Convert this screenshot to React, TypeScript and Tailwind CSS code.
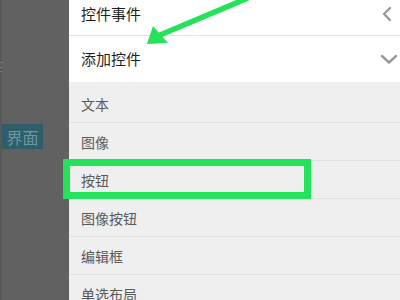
import React from "react";

const items = ["文本", "图像", "按钮", "图像按钮", "编辑框", "单选布局"];

export default function App() {
  const font = { fontFamily: '"Noto Sans CJK SC", "Noto Sans", sans-serif' };
  return (
    <div
      className="relative flex w-[400px] h-[300px] overflow-hidden bg-[#efefef]"
      style={font}
    >
      {/* left dimmed panel */}
      <div className="flex w-[69px] shrink-0 bg-[#616161]">
        <div className="w-[2px] shrink-0 bg-[#585858]" />
        <div className="flex flex-1 flex-col">
          <div className="h-[62px] shrink-0" />
          <div className="flex h-[10px] w-[3px] -ml-[2px] shrink-0 flex-col justify-between">
            <div className="h-px w-[3px] bg-[#7a7a7a]" />
            <div className="h-px w-[3px] bg-[#7a7a7a]" />
            <div className="h-px w-[2px] bg-[#7a7a7a]" />
          </div>
          <div className="h-[52px] shrink-0" />
          <div className="flex h-[25px] w-[41px] shrink-0 items-center justify-center bg-[#2f5e6a] text-[16px] leading-[20px] text-[#6c98a3]">
            界面
          </div>
        </div>
      </div>

      {/* right menu */}
      <div className="flex flex-1 flex-col">
        <div className="flex h-[35px] shrink-0 items-start justify-between bg-white pl-[12px] pr-[5px] pt-[3px]">
          <span className="text-[15px] leading-[22px] text-[#1e1e1e]">控件事件</span>
          <svg width="14" height="16" viewBox="0 0 14 16" className="mt-[3px] mr-[1px]">
            <path d="M10 2 L4 8 L10 14" fill="none" stroke="#9a9a9a" strokeWidth="2.4" strokeLinecap="round" strokeLinejoin="round" />
          </svg>
        </div>
        <div className="h-px shrink-0 bg-[#e3e3e3]" />
        <div className="flex h-[46px] shrink-0 items-center justify-between bg-white pl-[12px] pr-[2px]">
          <span className="text-[15px] leading-[22px] text-[#1e1e1e]">添加控件</span>
          <svg width="18" height="12" viewBox="0 0 18 12">
            <path d="M2 3 L9 9.5 L16 3" fill="none" stroke="#9a9a9a" strokeWidth="2.4" strokeLinecap="round" strokeLinejoin="round" />
          </svg>
        </div>
        <div className="flex shrink-0 flex-col pt-[3px]">
          {items.map((t) => (
            <div
              key={t}
              className="flex h-[38px] shrink-0 items-center border-b border-[#e0e0e0] pl-[12px]"
            >
              <span className="text-[14px] leading-[20px] text-[#5a5a5a]">{t}</span>
            </div>
          ))}
        </div>
      </div>

      {/* annotation: highlight box */}
      <div className="absolute left-[63px] top-[159px] h-[40px] w-[248px] border-[7px] border-[#24e35a]" />

      {/* annotation: arrow */}
      <svg
        className="absolute left-0 top-0"
        width="400"
        height="300"
        viewBox="0 0 400 300"
      >
        <line x1="248" y1="-2" x2="160" y2="35" stroke="#24e35a" strokeWidth="5.5" />
        <polygon points="147,44 153,26 168,43" fill="#24e35a" />
      </svg>
    </div>
  );
}
